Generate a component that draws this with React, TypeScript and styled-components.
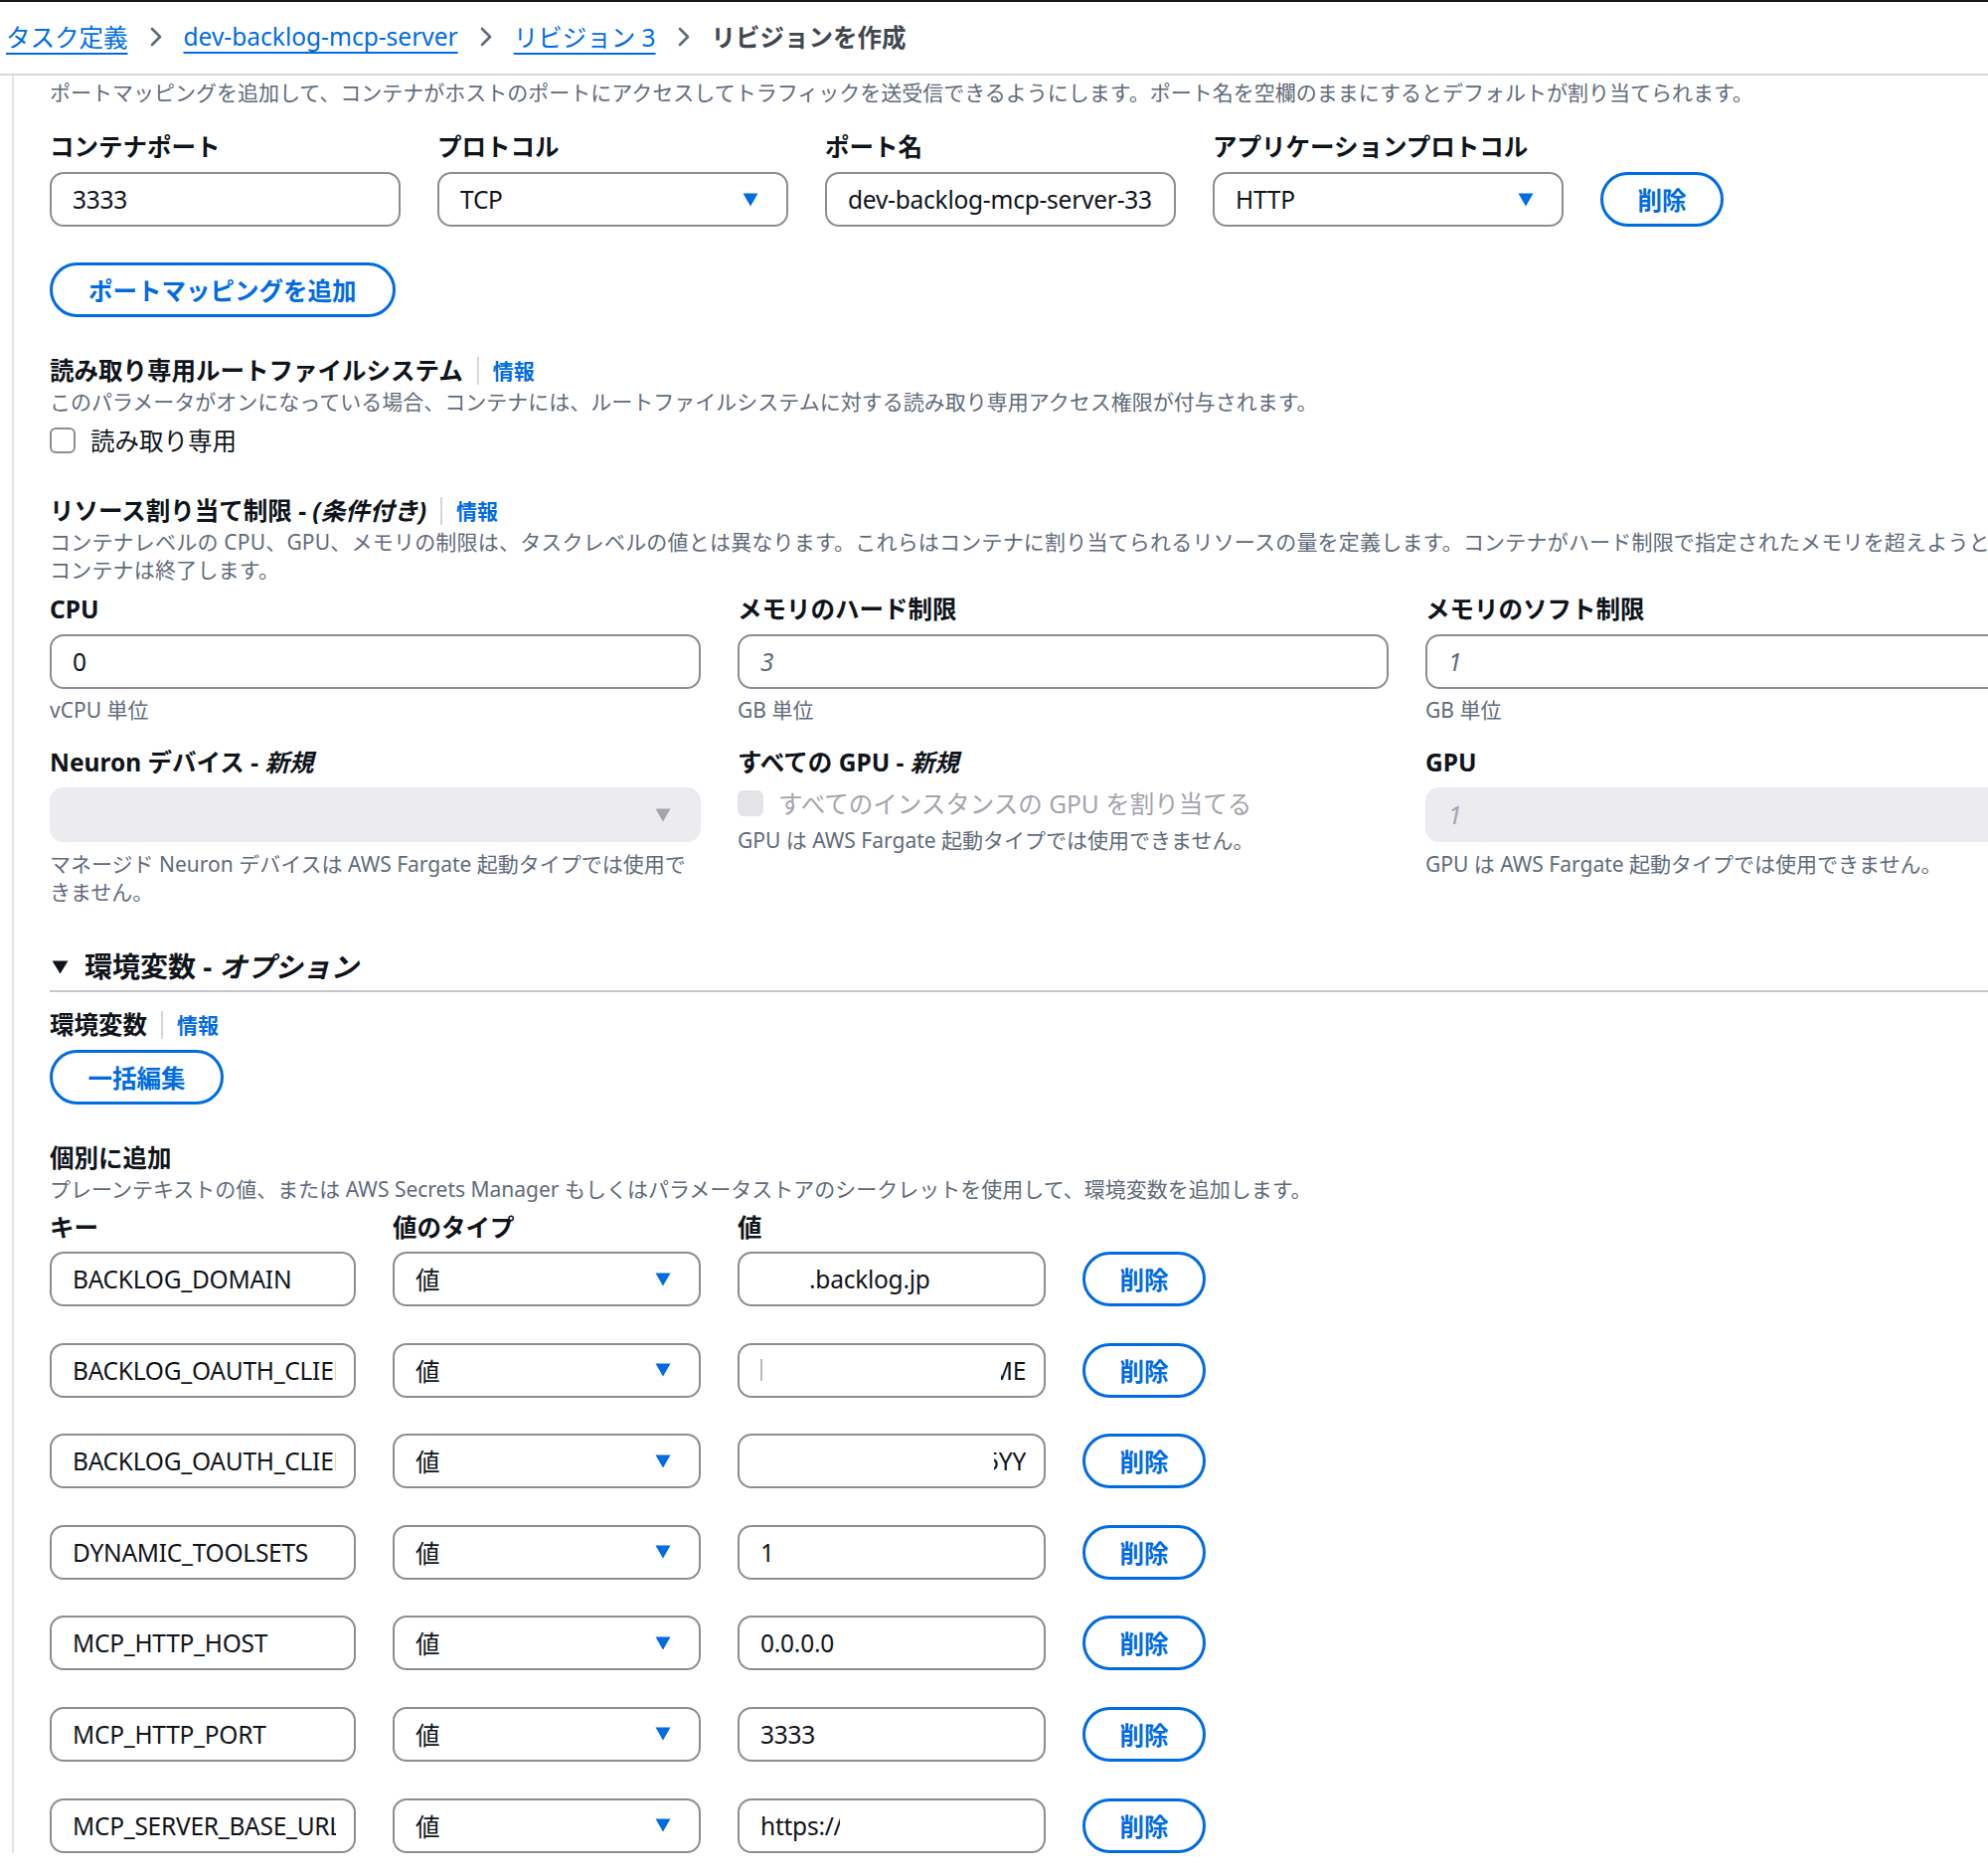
import React from 'react';
import styled, { createGlobalStyle, css } from 'styled-components';

const BLUE = '#006ce0';
const TEXT = '#0f141a';
const MUTED = '#5f6b7a';
const BORDER = '#8c8c94';
const DISABLED_BG = '#ebebf0';

const GlobalStyle = createGlobalStyle`
  html, body {
    margin: 0;
    padding: 0;
    background: #fff;
    overflow: hidden;
  }
  body {
    font-family: "Noto Sans", "Noto Sans CJK JP", sans-serif;
    color: ${TEXT};
  }
`;

const Page = styled.div`
  width: 2000px;
  min-height: 1887px;
  border-top: 2px solid #16191f;
  overflow: hidden;
`;

const Breadcrumbs = styled.nav`
  box-sizing: border-box;
  height: 74px;
  display: flex;
  align-items: center;
  padding: 0 0 3px 6px;
  border-bottom: 2px solid #d8d8dc;
  font-size: 24.5px;
  white-space: nowrap;
`;

const Crumb = styled.a`
  color: ${BLUE};
  text-decoration: underline;
  text-underline-offset: 6px;
  text-decoration-thickness: 2px;
`;

const CurrentCrumb = styled.span`
  color: #414750;
  font-weight: 700;
`;

const ChevronIcon = styled.svg`
  width: 14px;
  height: 22px;
  margin: 0 21px;
  flex-shrink: 0;
`;

const Body = styled.div`
  margin-left: 12px;
  border-left: 2px solid #e3e3e7;
  padding: 3px 0 0 36px;
  width: 2100px;
  display: flex;
  flex-direction: column;
`;

const Description = styled.p<{ $mt?: number; $nowrap?: boolean }>`
  margin: ${(p) => p.$mt ?? 0}px 0 0;
  font-size: 21px;
  line-height: 28px;
  color: ${MUTED};
  ${(p) =>
    p.$nowrap &&
    css`
      white-space: nowrap;
      letter-spacing: 0.2px;
    `}
`;

const Heading = styled.div<{ $mt?: number }>`
  margin-top: ${(p) => p.$mt ?? 0}px;
  display: flex;
  align-items: center;
  font-size: 24.5px;
  line-height: 35px;
  font-weight: 700;
  white-space: nowrap;
`;

const Em = styled.i`
  font-style: italic;
`;

const InfoLink = styled.a`
  margin-left: 14px;
  padding-left: 14px;
  border-left: 2px solid #d5d5da;
  line-height: 28px;
  font-size: 21px;
  font-weight: 700;
  color: ${BLUE};
`;

const Label = styled.div`
  font-size: 24.5px;
  line-height: 35px;
  font-weight: 700;
  white-space: nowrap;
`;

const FieldGroup = styled.div`
  display: flex;
  flex-direction: column;
  gap: 8px;
  min-width: 0;
`;

const Helper = styled.div<{ $mt?: number }>`
  margin-top: ${(p) => p.$mt ?? 0}px;
  font-size: 21px;
  line-height: 28px;
  color: ${MUTED};
`;

const Field = styled.div<{ $disabled?: boolean; $select?: boolean }>`
  box-sizing: border-box;
  height: 55px;
  display: flex;
  align-items: center;
  gap: 12px;
  padding: 0 ${(p) => (p.$select ? 28 : 18)}px 0 21px;
  border: 2px solid ${BORDER};
  border-radius: 14px;
  background: #fff;
  font-size: 24.5px;
  min-width: 0;
  ${(p) =>
    p.$disabled &&
    css`
      background: ${DISABLED_BG};
      border-color: ${DISABLED_BG};
    `}
`;

const FieldText = styled.span<{ $placeholder?: boolean; $muted?: boolean }>`
  flex: 1;
  min-width: 0;
  overflow: hidden;
  white-space: nowrap;
  letter-spacing: -0.25px;
  display: flex;
  align-items: center;
  ${(p) =>
    p.$placeholder &&
    css`
      font-style: italic;
      color: ${MUTED};
    `}
  ${(p) =>
    p.$muted &&
    css`
      color: #a4a4ad;
    `}
`;

const Hidden = styled.span<{ $w: number }>`
  display: inline-block;
  width: ${(p) => p.$w}px;
  flex-shrink: 0;
`;

const Tail = styled.span<{ $w: number }>`
  margin-left: auto;
  width: ${(p) => p.$w}px;
  overflow: hidden;
  direction: rtl;
  white-space: nowrap;
`;

const CutHead = styled.span<{ $w: number }>`
  display: inline-block;
  width: ${(p) => p.$w}px;
  overflow: hidden;
`;

const Caret = styled.span`
  width: 2px;
  height: 22px;
  background: #b9b9c0;
`;

const ArrowIcon = styled.svg`
  width: 16px;
  height: 14px;
  flex-shrink: 0;
`;

const PillButton = styled.button<{ $mt?: number; $w?: number }>`
  box-sizing: border-box;
  margin-top: ${(p) => p.$mt ?? 0}px;
  height: 55px;
  ${(p) =>
    p.$w
      ? css`
          width: ${p.$w}px;
        `
      : css`
          padding: 0 36px;
        `}
  align-self: flex-start;
  border: 3px solid ${BLUE};
  border-radius: 28px;
  background: #fff;
  color: ${BLUE};
  font-family: inherit;
  font-size: 24.5px;
  font-weight: 700;
  cursor: pointer;
  white-space: nowrap;
`;

const PortGrid = styled.div`
  margin-top: 23px;
  display: grid;
  grid-template-columns: repeat(4, 353px) 124px;
  column-gap: 37px;
  align-items: end;

  & > ${PillButton} {
    align-self: end;
  }
`;

const CheckRow = styled.label<{ $mt?: number; $disabled?: boolean }>`
  margin-top: ${(p) => p.$mt ?? 0}px;
  display: flex;
  align-items: center;
  gap: 15px;
  height: 35px;
  font-size: 24.5px;
  white-space: nowrap;
  color: ${(p) => (p.$disabled ? '#a4a4ad' : TEXT)};
`;

const Box = styled.span<{ $disabled?: boolean }>`
  box-sizing: border-box;
  width: 26px;
  height: 26px;
  border-radius: 6px;
  border: 2px solid ${BORDER};
  background: #fff;
  ${(p) =>
    p.$disabled &&
    css`
      border-color: #e3e3e8;
      background: #e3e3e8;
    `}
`;

const ResourceGrid = styled.div`
  margin-top: 8px;
  display: grid;
  grid-template-columns: repeat(3, 655px);
  column-gap: 37px;
  row-gap: 21px;
`;

const Expander = styled.div`
  margin-top: 44px;
  width: 2100px;
  display: flex;
  align-items: center;
  gap: 16px;
  padding-bottom: 6px;
  border-bottom: 2px solid #c6c6cd;
  font-size: 28px;
  line-height: 35px;
  font-weight: 700;
`;

const CaretDown = styled.svg`
  width: 17px;
  height: 14px;
  margin-left: 2px;
`;

const EnvGrid = styled.div`
  margin-top: 7px;
  display: grid;
  grid-template-columns: 308px 310px 310px 124px;
  column-gap: 37px;
  row-gap: 36.6px;
`;

const HeaderRow = styled.div`
  margin-top: 7px;
  display: grid;
  grid-template-columns: 308px 310px 310px;
  column-gap: 37px;
`;

function Chevron() {
  return (
    <ChevronIcon viewBox="0 0 14 22">
      <path d="M3 3 L11 11 L3 19" fill="none" stroke="#5f6b7a" strokeWidth="2.6" strokeLinecap="round" strokeLinejoin="round" />
    </ChevronIcon>
  );
}

function Arrow({ color = BLUE }: { color?: string }) {
  return (
    <ArrowIcon viewBox="0 0 16 14">
      <path d="M0.5 0.5 H15.5 L8 13.5 Z" fill={color} />
    </ArrowIcon>
  );
}

type EnvRow = { key: string; value: React.ReactNode };

const envRows: EnvRow[] = [
  {
    key: 'BACKLOG_DOMAIN',
    value: (
      <>
        <Hidden $w={49} />
        .backlog.jp
      </>
    ),
  },
  {
    key: 'BACKLOG_OAUTH_CLIENT_ID',
    value: (
      <>
        <Caret />
        <Tail $w={25}>ME</Tail>
      </>
    ),
  },
  {
    key: 'BACKLOG_OAUTH_CLIENT_SECRET',
    value: <Tail $w={32}>5YY</Tail>,
  },
  { key: 'DYNAMIC_TOOLSETS', value: '1' },
  { key: 'MCP_HTTP_HOST', value: '0.0.0.0' },
  { key: 'MCP_HTTP_PORT', value: '3333' },
  {
    key: 'MCP_SERVER_BASE_URL',
    value: (
      <>
        https:/<CutHead $w={6}>/</CutHead>
      </>
    ),
  },
];

export default function App() {
  return (
    <Page>
      <GlobalStyle />
      <Breadcrumbs>
        <Crumb>タスク定義</Crumb>
        <Chevron />
        <Crumb>dev-backlog-mcp-server</Crumb>
        <Chevron />
        <Crumb>リビジョン 3</Crumb>
        <Chevron />
        <CurrentCrumb>リビジョンを作成</CurrentCrumb>
      </Breadcrumbs>

      <Body>
        <Description>
          ポートマッピングを追加して、コンテナがホストのポートにアクセスしてトラフィックを送受信できるようにします。ポート名を空欄のままにするとデフォルトが割り当てられます。
        </Description>

        <PortGrid>
          <FieldGroup>
            <Label>コンテナポート</Label>
            <Field>
              <FieldText>3333</FieldText>
            </Field>
          </FieldGroup>
          <FieldGroup>
            <Label>プロトコル</Label>
            <Field $select>
              <FieldText>TCP</FieldText>
              <Arrow />
            </Field>
          </FieldGroup>
          <FieldGroup>
            <Label>ポート名</Label>
            <Field>
              <FieldText>dev-backlog-mcp-server-33</FieldText>
            </Field>
          </FieldGroup>
          <FieldGroup>
            <Label>アプリケーションプロトコル</Label>
            <Field $select>
              <FieldText>HTTP</FieldText>
              <Arrow />
            </Field>
          </FieldGroup>
          <PillButton $w={124}>削除</PillButton>
        </PortGrid>

        <PillButton $mt={36}>ポートマッピングを追加</PillButton>

        <Heading $mt={36}>
          読み取り専用ルートファイルシステム
          <InfoLink>情報</InfoLink>
        </Heading>
        <Description>
          このパラメータがオンになっている場合、コンテナには、ルートファイルシステムに対する読み取り専用アクセス権限が付与されます。
        </Description>
        <CheckRow $mt={7}>
          <Box />
          読み取り専用
        </CheckRow>

        <Heading $mt={36}>
          リソース割り当て制限 -&nbsp;<Em>(条件付き)</Em>
          <InfoLink>情報</InfoLink>
        </Heading>
        <Description $nowrap>
          コンテナレベルの CPU、GPU、メモリの制限は、タスクレベルの値とは異なります。これらはコンテナに割り当てられるリソースの量を定義します。コンテナがハード制限で指定されたメモリを超えようとすると、
          <br />
          コンテナは終了します。
        </Description>

        <ResourceGrid>
          <div>
            <FieldGroup>
              <Label>CPU</Label>
              <Field>
                <FieldText>0</FieldText>
              </Field>
            </FieldGroup>
            <Helper $mt={7}>vCPU 単位</Helper>
          </div>
          <div>
            <FieldGroup>
              <Label>メモリのハード制限</Label>
              <Field>
                <FieldText $placeholder>3</FieldText>
              </Field>
            </FieldGroup>
            <Helper $mt={7}>GB 単位</Helper>
          </div>
          <div>
            <FieldGroup>
              <Label>メモリのソフト制限</Label>
              <Field>
                <FieldText $placeholder>1</FieldText>
              </Field>
            </FieldGroup>
            <Helper $mt={7}>GB 単位</Helper>
          </div>

          <div>
            <FieldGroup>
              <Label>
                Neuron デバイス - <Em>新規</Em>
              </Label>
              <Field $disabled $select>
                <FieldText />
                <Arrow color="#a4a4ad" />
              </Field>
            </FieldGroup>
            <Helper $mt={8}>
              マネージド Neuron デバイスは AWS Fargate 起動タイプでは使用できません。
            </Helper>
          </div>
          <div>
            <Label>
              すべての GPU - <Em>新規</Em>
            </Label>
            <CheckRow $mt={6} $disabled>
              <Box $disabled />
              すべてのインスタンスの GPU を割り当てる
            </CheckRow>
            <Helper $mt={6}>GPU は AWS Fargate 起動タイプでは使用できません。</Helper>
          </div>
          <div>
            <FieldGroup>
              <Label>GPU</Label>
              <Field $disabled>
                <FieldText $placeholder $muted>
                  1
                </FieldText>
              </Field>
            </FieldGroup>
            <Helper $mt={8}>GPU は AWS Fargate 起動タイプでは使用できません。</Helper>
          </div>
        </ResourceGrid>

        <Expander>
          <CaretDown viewBox="0 0 17 14">
            <path d="M0.5 0.5 H16.5 L8.5 13.5 Z" fill={TEXT} />
          </CaretDown>
          <span>
            環境変数 - <Em>オプション</Em>
          </span>
        </Expander>

        <Heading $mt={15}>
          環境変数
          <InfoLink>情報</InfoLink>
        </Heading>
        <PillButton $mt={8} $w={175}>
          一括編集
        </PillButton>

        <Heading $mt={36}>個別に追加</Heading>
        <Description>
          プレーンテキストの値、または AWS Secrets Manager もしくはパラメータストアのシークレットを使用して、環境変数を追加します。
        </Description>

        <HeaderRow>
          <Label>キー</Label>
          <Label>値のタイプ</Label>
          <Label>値</Label>
        </HeaderRow>

        <EnvGrid>
          {envRows.map((row) => (
            <React.Fragment key={row.key}>
              <Field>
                <FieldText>{row.key}</FieldText>
              </Field>
              <Field $select>
                <FieldText>値</FieldText>
                <Arrow />
              </Field>
              <Field>
                <FieldText>{row.value}</FieldText>
              </Field>
              <PillButton $w={124}>削除</PillButton>
            </React.Fragment>
          ))}
        </EnvGrid>
      </Body>
    </Page>
  );
}
